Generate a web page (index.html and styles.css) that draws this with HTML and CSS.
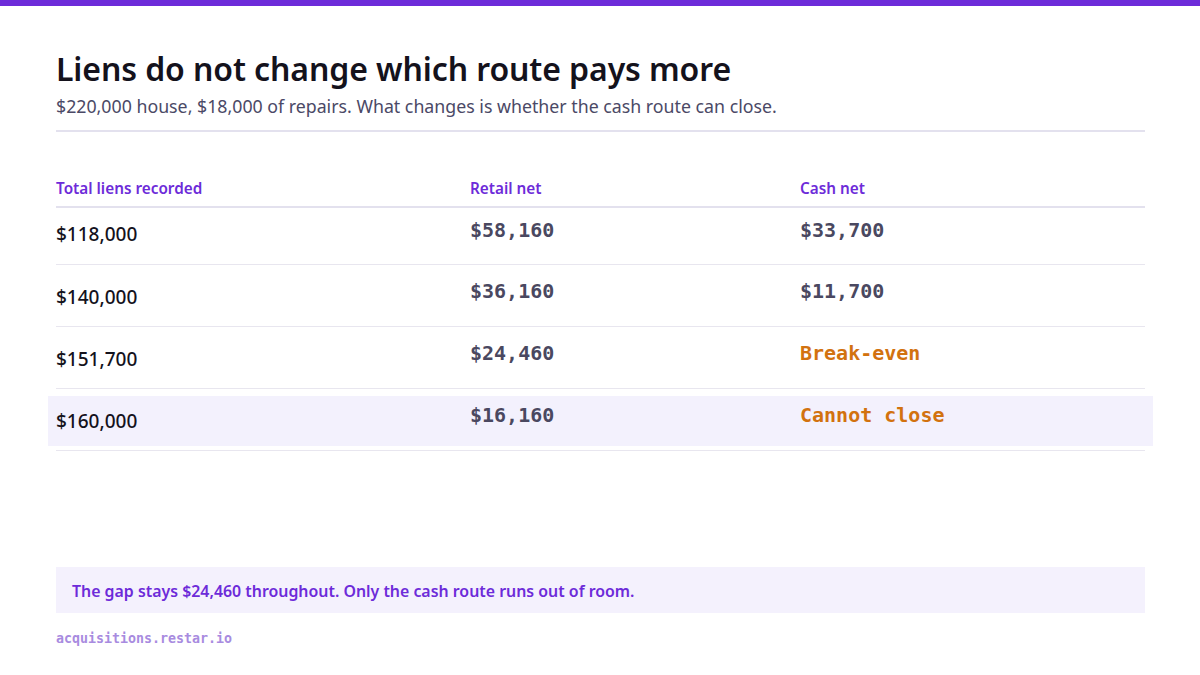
FILE: index.html
```html
<!DOCTYPE html>
<html>
<head>
<meta charset="utf-8">
<link rel="stylesheet" href="styles.css">
</head>
<body>
<div class="topbar"></div>
<main class="page">
  <header class="head">
    <h1 class="title">Liens do not change which route pays more</h1>
    <p class="subtitle">$220,000 house, $18,000 of repairs. What changes is whether the cash route can close.</p>
  </header>
  <section class="table">
    <div class="row hdr">
      <div class="c1">Total liens recorded</div>
      <div class="c2">Retail net</div>
      <div class="c3">Cash net</div>
    </div>
    <div class="row first">
      <div class="c1 amt">$118,000</div>
      <div class="c2 mono">$58,160</div>
      <div class="c3 mono">$33,700</div>
    </div>
    <div class="row">
      <div class="c1 amt">$140,000</div>
      <div class="c2 mono">$36,160</div>
      <div class="c3 mono">$11,700</div>
    </div>
    <div class="row">
      <div class="c1 amt">$151,700</div>
      <div class="c2 mono">$24,460</div>
      <div class="c3 mono warn">Break-even</div>
    </div>
    <div class="row last">
      <div class="hl">
        <div class="c1 amt">$160,000</div>
        <div class="c2 mono">$16,160</div>
        <div class="c3 mono warn">Cannot close</div>
      </div>
    </div>
  </section>
  <div class="callout">The gap stays $24,460 throughout. Only the cash route runs out of room.</div>
  <div class="foot">acquisitions.restar.io</div>
</main>
</body>
</html>
```
FILE: styles.css
```css
* { box-sizing: border-box; }
html, body { margin: 0; padding: 0; }
body {
  width: 1200px;
  height: 675px;
  background: #ffffff;
  font-family: "Noto Sans", "Open Sans", sans-serif;
  color: #14121c;
  overflow: hidden;
}
.topbar { height: 6px; background: #6d2bd9; }
.page {
  padding: 0 55px 0 56px;
  height: 669px;
  display: flex;
  flex-direction: column;
}
.head {
  padding-top: 43px;
  padding-bottom: 12px;
  border-bottom: 2px solid #e3e1ee;
}
.title {
  margin: 0;
  font-size: 32px;
  font-weight: 600;
  line-height: 40px;
  letter-spacing: -0.1px;
  color: #14121c;
}
.subtitle {
  margin: 5px 0 0;
  font-size: 17.75px;
  line-height: 24px;
  color: #4b4966;
}
.table { margin-top: 46px; }
.row {
  display: grid;
  grid-template-columns: 414px 330px 1fr;
  height: 62px;
  border-bottom: 1px solid #e8e6ef;
}
.row.hdr {
  height: 30px;
  border-bottom: 2px solid #e3e1ee;
  font-size: 15.3px;
  font-weight: 600;
  color: #6d2bd9;
  line-height: 20px;
}
.row.first { height: 57px; }
.amt {
  font-size: 19px;
  font-weight: 500;
  line-height: 28px;
  padding-top: 18px;
  color: #14121c;
}
.mono {
  font-family: "DejaVu Sans Mono", monospace;
  font-weight: 700;
  font-size: 20px;
  line-height: 24px;
  padding-top: 14px;
  color: #4a4860;
}
.row.first .amt { padding-top: 12px; }
.row.first .mono { padding-top: 10px; }
.warn { color: #d2720f; }
.row.last { display: block; padding-top: 7px; }
.hl {
  display: grid;
  grid-template-columns: 414px 330px 1fr;
  margin: 0 -8px;
  padding: 0 8px;
  height: 50px;
  background: #f3f1fd;
}
.hl .amt { padding-top: 11px; }
.hl .mono { padding-top: 7px; }
.callout {
  margin-top: auto;
  background: #f4f1fd;
  color: #6d2bd9;
  font-size: 15.9px;
  font-weight: 600;
  line-height: 22px;
  padding: 12.5px 16px 11.5px;
}
.foot {
  margin-top: 17px;
  margin-bottom: 27px;
  font-family: "DejaVu Sans Mono", monospace;
  font-weight: 700;
  font-size: 13.3px;
  line-height: 18px;
  color: #a88be0;
}
```
